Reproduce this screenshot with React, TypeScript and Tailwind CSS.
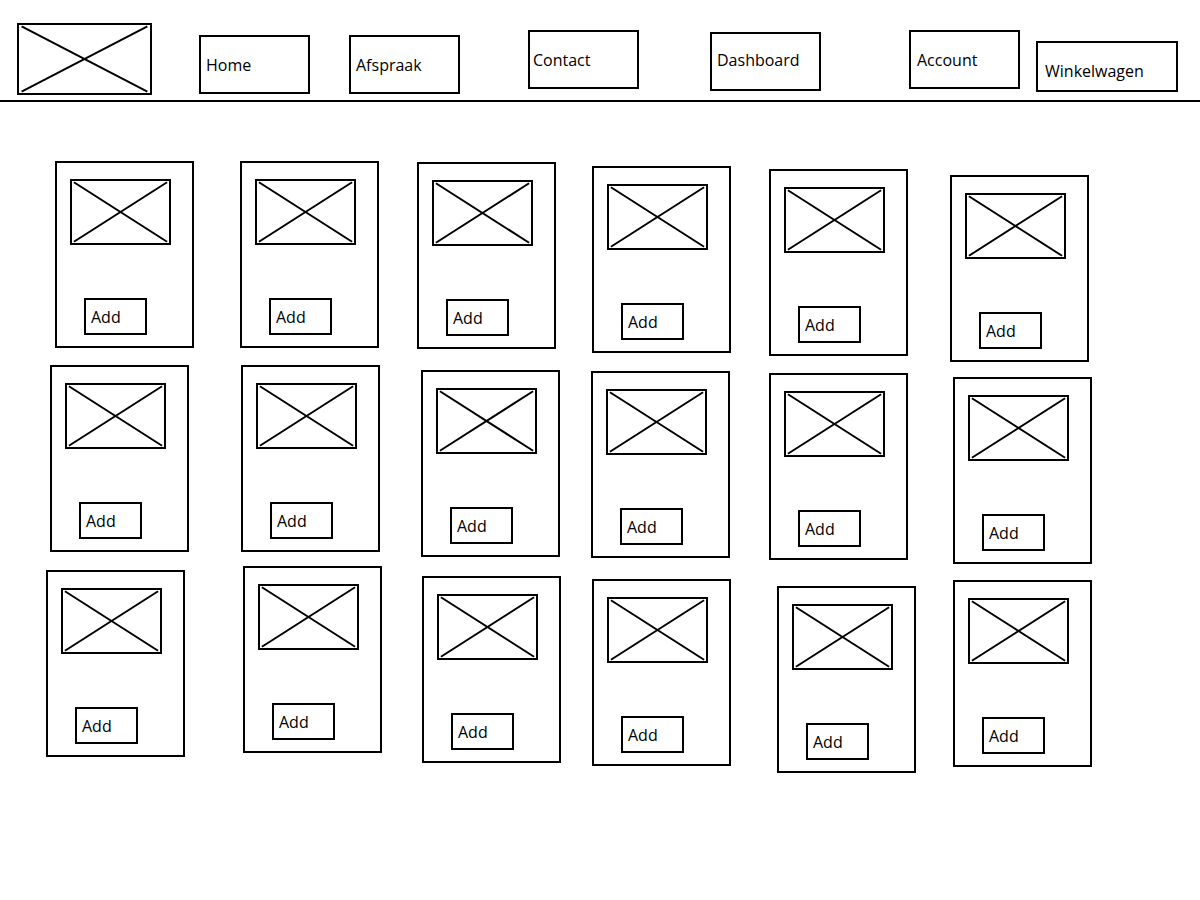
import React from "react";

const font = { fontFamily: '"Open Sans", "Liberation Sans", sans-serif' };

// X placeholder for an image
const Placeholder = ({ className }: { className: string }) => (
  <div className={`border-2 border-black ${className}`}>
    <svg className="w-full h-full block" viewBox="0 0 100 100" preserveAspectRatio="none">
      <line x1="2" y1="2" x2="98" y2="98" stroke="black" strokeWidth="2" vectorEffect="non-scaling-stroke" />
      <line x1="98" y1="2" x2="2" y2="98" stroke="black" strokeWidth="2" vectorEffect="non-scaling-stroke" />
    </svg>
  </div>
);

const navItems = [
  { label: "Home", cls: "ml-[47px] mt-[35px] w-[111px] h-[59px] pl-[5px]" },
  { label: "Afspraak", cls: "ml-[39px] mt-[35px] w-[111px] h-[59px] pl-[5px]" },
  { label: "Contact", cls: "ml-[68px] mt-[30px] w-[111px] h-[59px] pl-[3px]" },
  { label: "Dashboard", cls: "ml-[71px] mt-[32px] w-[111px] h-[59px] pl-[5px] pb-[4px]" },
  { label: "Account", cls: "ml-[88px] mt-[30px] w-[111px] h-[59px] pl-[6px]" },
  { label: "Winkelwagen", cls: "ml-[16px] mt-[41px] w-[142px] h-[51px] pl-[7px] pt-[9px]" },
];

const rows = [
  {
    cls: "mt-[59px]",
    cards: [
      "ml-[55px] mt-0",
      "ml-[46px] mt-0",
      "ml-[38px] mt-[1px]",
      "ml-[36px] mt-[5px]",
      "ml-[38px] mt-[8px]",
      "ml-[42px] mt-[14px]",
    ],
  },
  {
    cls: "mt-[3px]",
    cards: [
      "ml-[50px] mt-0",
      "ml-[52px] mt-0",
      "ml-[41px] mt-[5px]",
      "ml-[31px] mt-[6px]",
      "ml-[39px] mt-[8px]",
      "ml-[45px] mt-[12px]",
    ],
  },
  {
    cls: "mt-[2px]",
    cards: [
      "ml-[46px] mt-[4px]",
      "ml-[58px] mt-0",
      "ml-[40px] mt-[10px]",
      "ml-[31px] mt-[13px]",
      "ml-[46px] mt-[20px]",
      "ml-[37px] mt-[14px]",
    ],
  },
];

const ProductCard = ({ className }: { className: string }) => (
  <div className={`w-[139px] h-[187px] border-2 border-black flex flex-col shrink-0 ${className}`}>
    <Placeholder className="ml-[13px] mt-[16px] w-[101px] h-[66px]" />
    <div className="ml-[27px] mt-[53px] w-[63px] h-[37px] border-2 border-black flex items-center pl-[5px] text-[16px] text-black">
      Add
    </div>
  </div>
);

export default function App() {
  return (
    <div className="w-[1200px] h-[900px] bg-white overflow-hidden" style={font}>
      <header className="h-[102px] border-b-2 border-black flex items-start">
        <Placeholder className="ml-[17px] mt-[23px] w-[135px] h-[72px] shrink-0" />
        {navItems.map((item) => (
          <div
            key={item.label}
            className={`border-2 border-black flex items-center shrink-0 text-[16px] text-black ${item.cls}`}
          >
            {item.label}
          </div>
        ))}
      </header>

      <main>
        {rows.map((row, i) => (
          <div key={i} className={`flex items-start ${row.cls}`}>
            {row.cards.map((c, j) => (
              <ProductCard key={j} className={c} />
            ))}
          </div>
        ))}
      </main>
    </div>
  );
}
